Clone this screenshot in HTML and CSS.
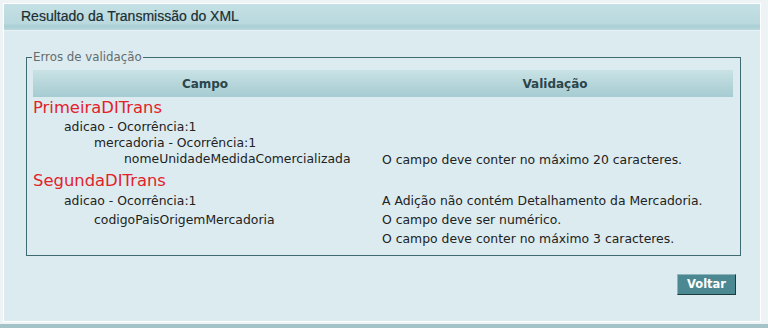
FILE: index.html
```html
<!DOCTYPE html>
<html lang="pt-BR">
<head>
<meta charset="utf-8">
<title>Resultado da Transmissão do XML</title>
<link rel="stylesheet" href="styles.css">
</head>
<body>
<div class="page">
  <div class="panel">
    <div class="panel-header">Resultado da Transmissão do XML</div>
    <div class="panel-body">
      <fieldset class="errors">
        <legend>Erros de validação</legend>
        <table class="grid">
          <thead>
            <tr><th class="col-campo">Campo</th><th>Validação</th></tr>
          </thead>
          <tbody class="group-a">
            <tr class="group"><td colspan="2">PrimeiraDITrans</td></tr>
            <tr><td class="l1">adicao - Ocorrência:1</td><td></td></tr>
            <tr><td class="l2">mercadoria - Ocorrência:1</td><td></td></tr>
            <tr class="leaf"><td class="l3">nomeUnidadeMedidaComercializada</td><td class="msg">O campo deve conter no máximo 20 caracteres.</td></tr>
          </tbody>
          <tbody class="group-b">
            <tr class="group"><td colspan="2">SegundaDITrans</td></tr>
            <tr><td class="l1">adicao - Ocorrência:1</td><td class="msg">A Adição não contém Detalhamento da Mercadoria.</td></tr>
            <tr><td class="l2">codigoPaisOrigemMercadoria</td><td class="msg"><div>O campo deve ser numérico.</div><div>O campo deve conter no máximo 3 caracteres.</div></td></tr>
          </tbody>
        </table>
      </fieldset>
      <div class="actions"><button class="btn" type="button">Voltar</button></div>
    </div>
  </div>
</div>
</body>
</html>
```

FILE: styles.css
```css
html, body {
  margin: 0;
  padding: 0;
}
body {
  background: #eef4f5;
  font-family: "DejaVu Sans", Verdana, sans-serif;
  font-size: 12.4px;
  color: #222;
}
.page {
  width: 768px;
  height: 328px;
  padding: 3px 0 0 3px;
  box-sizing: border-box;
  border-bottom: 4px solid #a3c3c8;
}
.panel {
  width: 758px;
  height: 319px;
  box-sizing: border-box;
  border: 1px solid #ffffff;
  background: #dcebef;
}
.panel-header {
  height: 27px;
  box-sizing: border-box;
  padding-left: 17px;
  line-height: 25px;
  font-family: "Liberation Sans", Arial, sans-serif;
  font-size: 14px;
  color: #1a2e33;
  -webkit-text-stroke: 0.2px #1a2e33;
  background: linear-gradient(to bottom, #c4e0e4 0%, #b9d9de 75%, #a9cfd4 85%, #b8d8dc 100%);
  border-bottom: 1px solid #e9f3f5;
}
.panel-body {
  padding: 19px 19px 0 22px;
}
.errors {
  margin: 0;
  padding: 6px 7px 7px 6px;
  border: 1px solid #3f6a72;
  min-width: 0;
}
.errors legend {
  padding: 0 1px;
  margin-left: -1px;
  font-size: 11.8px;
  line-height: 14px;
  color: #636c6e;
}
.grid {
  width: 700px;
  border-collapse: collapse;
  border-spacing: 0;
}
.grid th {
  height: 27px;
  padding: 0;
  font-size: 12px;
  font-weight: bold;
  color: #2b454a;
  background: linear-gradient(to bottom, #c9e2e5 0%, #b3d4d9 60%, #a5ccd1 100%);
  text-align: center;
}
.col-campo {
  width: 344px;
}
.grid td {
  padding: 0;
  line-height: 16px;
  vertical-align: top;
  white-space: nowrap;
}
.grid .group td {
  font-size: 16.4px;
  line-height: 22px;
  color: #e3222a;
}
.group-b .group td {
  line-height: 21px;
}
.group-b td {
  line-height: 19px;
}
.l1 { padding-left: 31px !important; }
.l2 { padding-left: 61px !important; }
.l3 { padding-left: 91px !important; }
.leaf td {
  padding-bottom: 2px !important;
}
.leaf .msg {
  padding-top: 1px !important;
}
.msg {
  padding-left: 5px !important;
}
.actions {
  display: flex;
  justify-content: flex-end;
  padding: 18px 5px 0 0;
}
.btn {
  width: 59px;
  height: 21px;
  padding: 0;
  font-family: "DejaVu Sans", Verdana, sans-serif;
  font-size: 11.5px;
  font-weight: bold;
  color: #ffffff;
  background: #4b8892;
  border: 1px solid;
  border-color: #8fb6bc #1f3a3f #1f3a3f #8fb6bc;
  line-height: 17px;
}
```
